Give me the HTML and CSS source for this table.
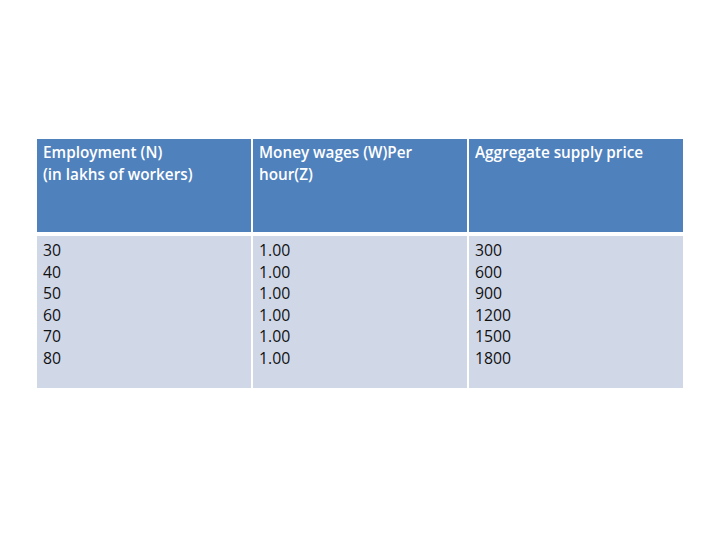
FILE: index.html
```html
<!DOCTYPE html>
<html>
<head>
<meta charset="utf-8">
<link rel="stylesheet" href="styles.css">
</head>
<body>
<div class="page">
  <div class="table">
    <div class="cell head">Employment (N)<br>(in lakhs of workers)</div>
    <div class="cell head">Money wages (W)Per<br>hour(Z)</div>
    <div class="cell head">Aggregate supply price</div>
    <div class="cell body">30<br>40<br>50<br>60<br>70<br>80</div>
    <div class="cell body">1.00<br>1.00<br>1.00<br>1.00<br>1.00<br>1.00</div>
    <div class="cell body">300<br>600<br>900<br>1200<br>1500<br>1800</div>
  </div>
</div>
</body>
</html>
```
FILE: styles.css
```css
html, body {
  margin: 0;
  padding: 0;
  background: #ffffff;
}
.page {
  width: 720px;
  height: 540px;
  padding: 139px 0 0 37px;
  box-sizing: border-box;
}
.table {
  display: grid;
  grid-template-columns: 214px 214px 214px;
  grid-template-rows: 93px 152px;
  column-gap: 2px;
  row-gap: 4px;
  font-family: "Open Sans", "Liberation Sans", sans-serif;
  line-height: 21.6px;
}
.cell {
  padding: 3px 6px;
  box-sizing: border-box;
}
.head {
  background: #4f81bd;
  color: #ffffff;
  font-weight: 600;
  font-size: 15.3px;
}
.body {
  padding-top: 4px;
  background: #d0d8e8;
  color: #111111;
  font-size: 15.8px;
}
```
